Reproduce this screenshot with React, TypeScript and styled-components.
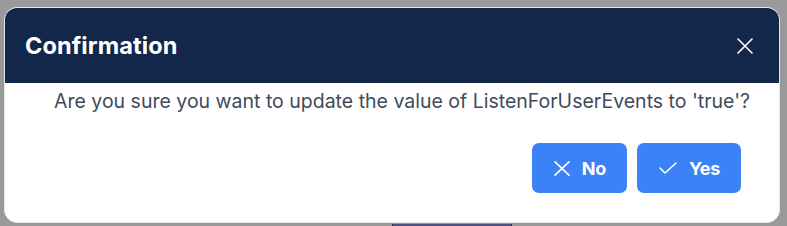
import styled, { createGlobalStyle } from "styled-components";

const Global = createGlobalStyle`
  html, body {
    margin: 0;
    padding: 0;
    background: #999999;
    font-family: Inter, "Noto Sans", sans-serif;
  }
`;

export default function App() {
  return (
    <Backdrop>
      <Global />
      <Dialog>
        <Header>
          <Title>Confirmation</Title>
          <CloseButton aria-label="close">
            <svg width="16" height="16" viewBox="0 0 16 16" fill="none">
              <path d="M1 1L15 15M15 1L1 15" stroke="#fff" strokeWidth="1.6" strokeLinecap="round" />
            </svg>
          </CloseButton>
        </Header>
        <Message>
          Are you sure you want to update the value of ListenForUserEvents to 'true'?
        </Message>
        <Footer>
          <ActionButton>
            <svg width="16" height="15" viewBox="0 0 16 15" fill="none">
              <path d="M1 0.8L15 14.2M15 0.8L1 14.2" stroke="#fff" strokeWidth="1.6" strokeLinecap="round" />
            </svg>
            No
          </ActionButton>
          <ActionButton>
            <svg width="18" height="12" viewBox="0 0 18 12" fill="none">
              <path d="M1 6L6 11L17 1" stroke="#fff" strokeWidth="1.6" strokeLinecap="round" strokeLinejoin="round" />
            </svg>
            Yes
          </ActionButton>
        </Footer>
      </Dialog>
      <PageBar />
    </Backdrop>
  );
}

const Backdrop = styled.div`
  width: 787px;
  height: 226px;
  padding: 7px 0 0 4px;
  box-sizing: border-box;
  overflow: hidden;
`;

const Dialog = styled.div`
  width: 776px;
  height: 216px;
  box-sizing: border-box;
  background: #fff;
  border: 1px solid #e3e8ef;
  border-radius: 13px;
  overflow: hidden;
  display: flex;
  flex-direction: column;
`;

const Header = styled.div`
  height: 75px;
  flex-shrink: 0;
  background: #13274a;
  display: flex;
  align-items: center;
  justify-content: space-between;
  padding: 0 26px 0 20px;
`;

const Title = styled.h2`
  margin: 0;
  color: #fff;
  font-size: 23.5px;
  font-weight: 700;
  letter-spacing: 0.1px;
`;

const CloseButton = styled.button`
  background: none;
  border: 0;
  padding: 0;
  display: flex;
  cursor: pointer;
`;

const Message = styled.p`
  margin: 6px 0 0 49px;
  color: #3f4a5c;
  font-size: 19.5px;
  line-height: 24px;
  white-space: nowrap;
`;

const Footer = styled.div`
  display: flex;
  justify-content: flex-end;
  gap: 10px;
  padding: 0 38px 0 0;
  margin-top: 30px;
`;

const ActionButton = styled.button`
  height: 50px;
  padding: 0 21px 0 22px;
  display: flex;
  align-items: center;
  gap: 12px;
  background: #3b82f6;
  color: #fff;
  border: 0;
  border-radius: 7px;
  font-family: Inter, "Noto Sans", sans-serif;
  font-size: 18px;
  font-weight: 700;
  letter-spacing: -0.3px;
  cursor: pointer;
`;

const PageBar = styled.div`
  width: 120px;
  height: 4px;
  margin: 1px 0 0 388px;
  box-sizing: border-box;
  background: #4f5080;
  border-left: 1px solid #2e2e55;
  border-right: 1px solid #2e2e55;
`;
